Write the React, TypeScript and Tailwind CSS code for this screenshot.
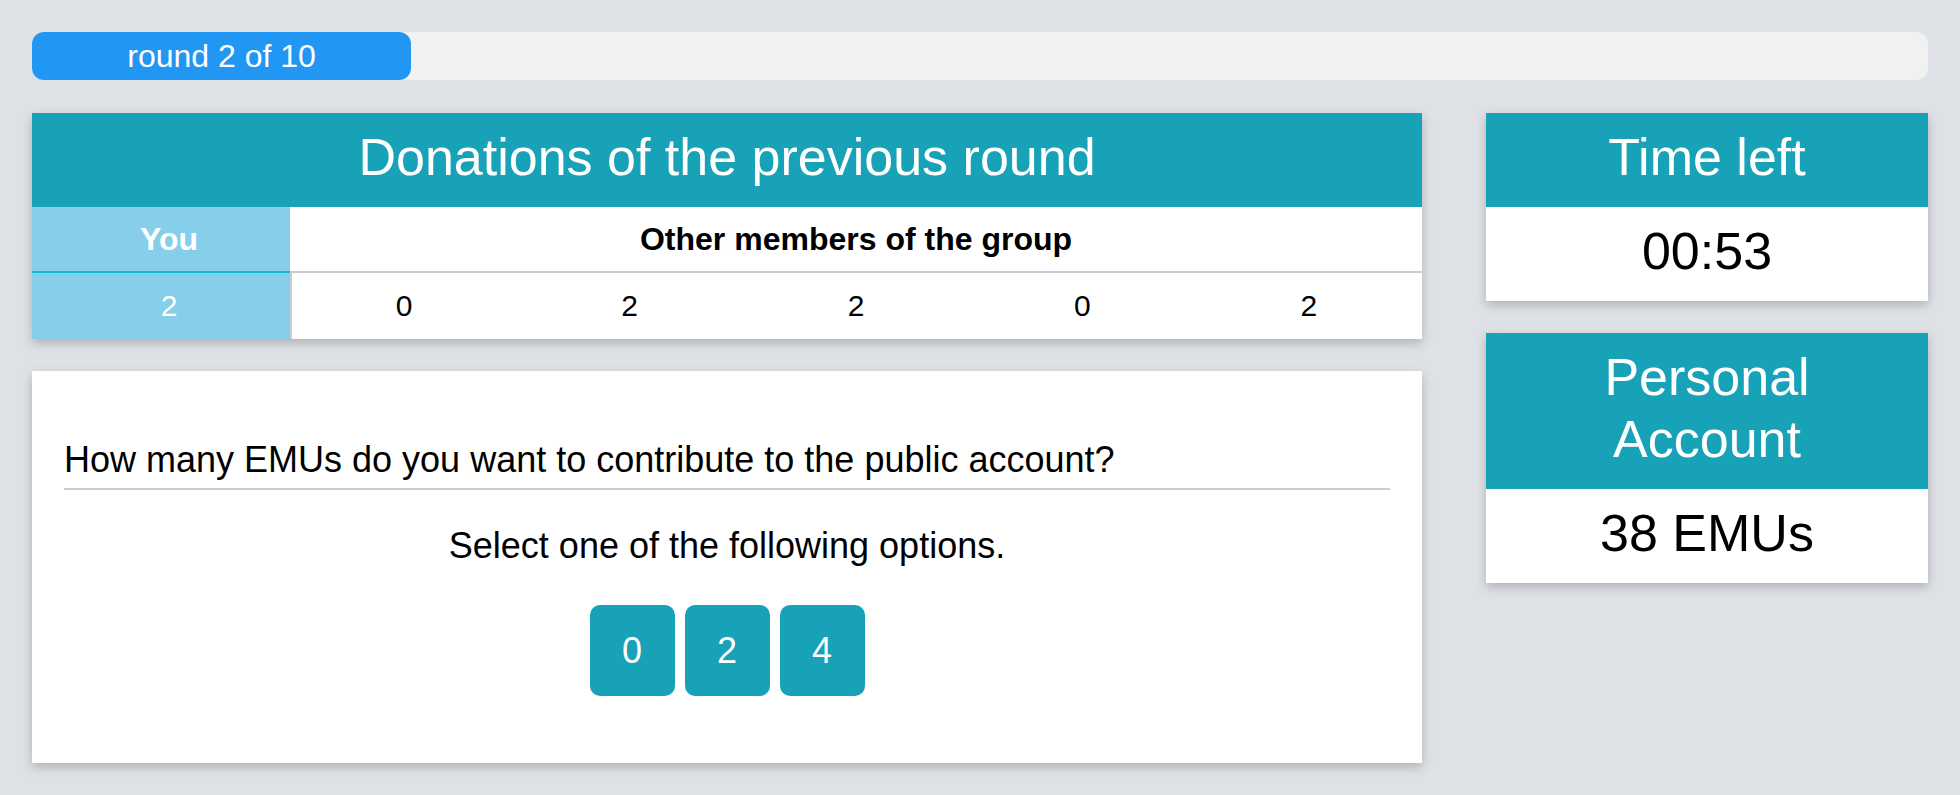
import React from "react";

const others = [0, 2, 2, 0, 2];

function InfoCard({ title, value }: { title: React.ReactNode; value: string }) {
  return (
    <div className="shadow-[0_4px_10px_rgba(0,0,0,0.22)]">
      <div className="bg-[#17a2b8] pb-[19px] pt-[13px] text-center text-[52px] leading-[62px] text-white">{title}</div>
      <div className="bg-white pb-[19px] pt-[13px] text-center text-[52px] leading-[62px] text-black">{value}</div>
    </div>
  );
}

export default function App() {
  return (
    <div className="min-h-screen w-full bg-[#dee2e6] p-8 font-['Liberation_Sans',Arial,sans-serif]">
      <div className="h-12 w-full rounded-xl bg-[#f1f1f1]">
        <div className="flex h-full w-[20%] items-center justify-center rounded-xl bg-[#2196f3] text-[32px] leading-none text-white">
          round 2 of 10
        </div>
      </div>

      <div className="mt-[33px] flex items-start gap-16">
        <div className="flex min-w-0 flex-1 flex-col gap-8">
          <div className="shadow-[0_4px_10px_rgba(0,0,0,0.22)]">
            <div className="bg-[#17a2b8] pb-[19px] pt-[13px] text-center text-[52px] leading-[62px] text-white">
              Donations of the previous round
            </div>
            <div className="grid grid-cols-[258px_repeat(5,1fr)] text-[30px] leading-[1.15]">
              <div className="flex h-[66px] items-center justify-center border-b-2 border-[#12bcd4] bg-[#87ceeb] pl-4 text-[32px] font-bold text-white">
                You
              </div>
              <div className="col-span-5 flex h-[66px] items-center justify-center border-b-2 border-[#cccccc] bg-white text-[32px] font-bold text-black">
                Other members of the group
              </div>
              <div className="flex h-[66px] items-center justify-center bg-[#87ceeb] pl-4 text-white">2</div>
              {others.map((v, i) => (
                <div
                  key={i}
                  className={
                    i === 0
                      ? "flex h-[66px] items-center justify-center border-l-2 border-[#cccccc] bg-white text-black"
                      : "flex h-[66px] items-center justify-center bg-white text-black"
                  }
                >
                  {v}
                </div>
              ))}
            </div>
          </div>

          <div className="bg-white px-8 pb-[67px] pt-[69px] shadow-[0_4px_10px_rgba(0,0,0,0.22)]">
            <div className="border-b-2 border-[#cccccc] pb-2 text-[36px] leading-[40px] text-black">
              How many EMUs do you want to contribute to the public account?
            </div>
            <div className="mt-9 text-center text-[36px] leading-[40px] text-black">
              Select one of the following options.
            </div>
            <div className="mt-[39px] flex justify-center gap-[10px]">
              {[0, 2, 4].map((n) => (
                <button
                  key={n}
                  className="flex h-[91px] w-[85px] items-center justify-center rounded-[10px] bg-[#17a2b8] text-[36px] text-white"
                >
                  {n}
                </button>
              ))}
            </div>
          </div>
        </div>

        <div className="flex w-[442px] flex-col gap-8">
          <InfoCard title="Time left" value="00:53" />
          <InfoCard
            title={
              <>
                Personal
                <br />
                Account
              </>
            }
            value="38 EMUs"
          />
        </div>
      </div>
    </div>
  );
}
